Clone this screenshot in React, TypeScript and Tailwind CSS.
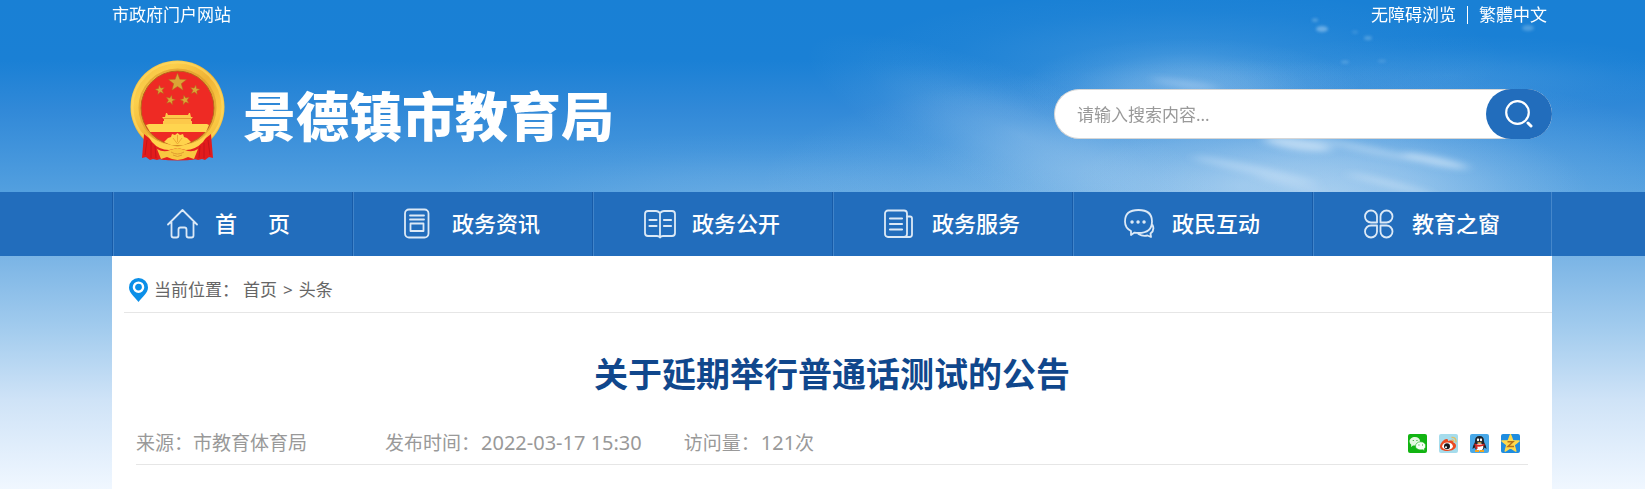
import React from 'react';
import clsx from 'clsx';

const star = (cx: number, cy: number, r: number, turn = 0) =>
  Array.from({ length: 10 }, (_, i) => {
    const radius = i % 2 ? r * 0.42 : r;
    const a = ((i * 36 - 90 + turn) * Math.PI) / 180;
    return `${(cx + radius * Math.cos(a)).toFixed(2)},${(cy + radius * Math.sin(a)).toFixed(2)}`;
  }).join(' ');

const Emblem = () => (
  <svg viewBox="0 0 95 101" className="h-[101px] w-[95px] shrink-0" aria-hidden="true">
    <defs>
      <linearGradient id="gold" x1="0" y1="0" x2="1" y2="1">
        <stop offset="0" stopColor="#f3b93c" />
        <stop offset=".25" stopColor="#fbcf4c" />
        <stop offset=".5" stopColor="#f0b335" />
        <stop offset=".75" stopColor="#fccb45" />
        <stop offset="1" stopColor="#e9a92e" />
      </linearGradient>
    </defs>
    <ellipse cx="47.5" cy="47" rx="47" ry="46.5" fill="url(#gold)" />
    <ellipse cx="47.5" cy="47" rx="45" ry="44.5" fill="none" stroke="#ffdb66" strokeWidth="2" opacity=".6" />
    <ellipse cx="47.5" cy="47.500" rx="38" ry="38" fill="none" stroke="#d9982a" strokeWidth="2" opacity=".6" />
    <ellipse cx="47.5" cy="48" rx="36.5" ry="37" fill="#ee2a24" stroke="#b8641c" strokeWidth="1" />
    <g fill="#dba536" stroke="#b4671c" strokeWidth=".5">
      <polygon points={star(47.5, 22.5, 9.5)} />
      <polygon points={star(30, 30, 5, -10)} />
      <polygon points={star(65, 30, 5, 10)} />
      <polygon points={star(40.5, 40, 5, 14)} />
      <polygon points={star(55, 40, 5, -14)} />
    </g>
    <path d="M36 53h1l1 2h20l1-2h1l1 4h2l-2 2v2h1v3H33v-3h1v-2l-2-2h3z" fill="#fdc94a" />
    <path d="M33 58.500h29" stroke="#e59c30" strokeWidth="1" />
    <path d="M19 64h58l2 1-3 7H20l-4-7z" fill="#ffd54f" />
    <path d="M14 74c4 3 8 7 15 12l6 14-5-1-3 1-4-1-3 1-4-3-4 1z" fill="#e21c1c" />
    <path d="M81 74c-4 3-8 7-15 12l-6 14 5-1 3 1 4-1 3 1 4-3 4 1z" fill="#e21c1c" />
    <path d="M17 80l-2 15M21 83v15M25 86l1 12M78 80l2 15M74 83v15M70 86l-1 12" stroke="#b9121a" strokeWidth="1" opacity=".7" />
    <path d="M25 82q22 12 45 0l-3 17q-19 3-39 0z" fill="#e5201f" />
    <path d="M17 74q11 9 20 10l10.500 3 10.500-3q9-1 20-10l-5 8q-8 8-17 8l-8.500-2-8.500 2q-10 0-17-8z" fill="#ffd34c" />
    <path d="M38 78l3-1 1-3 3 1 2.500-2 2.500 2 3-1 1 3 3 1 4 4-7 3h-13l-7-3z" fill="#ffd34c" />
    <path d="M43 78l4.500 6 4.500-6M47.500 75v7" fill="none" stroke="#eda833" strokeWidth="1" />
    <path d="M27 89q7 4 13 1l7.500-2 7.500 2q7 3 13-1l-4 10-6-2-5 2-5.500 1-5.500-1-5-2-6 2z" fill="#f8c840" />
    <path d="M41 92q6.500 4 13 0M43 95q4.500 3 9 0" fill="none" stroke="#e09c30" strokeWidth="1" />
  </svg>
);

const Clouds = () => (
  <svg
    viewBox="0 0 1645 192"
    preserveAspectRatio="xMaxYMin slice"
    className="pointer-events-none absolute inset-0 h-full w-full"
    aria-hidden="true"
  >
    <defs>
      <radialGradient id="glow">
        <stop offset="0" stopColor="#d6e8f8" stopOpacity="1" />
        <stop offset=".35" stopColor="#d0e5f7" stopOpacity=".7" />
        <stop offset=".7" stopColor="#c4dff5" stopOpacity=".22" />
        <stop offset="1" stopColor="#c4dff5" stopOpacity="0" />
      </radialGradient>
      <filter id="wisp" x="-50%" y="-200%" width="200%" height="500%"><feGaussianBlur stdDeviation="6 3" /></filter>
      <filter id="speck" x="-50%" y="-50%" width="200%" height="200%"><feGaussianBlur stdDeviation="1.5" /></filter>
    </defs>
    <g fill="url(#glow)">
      <ellipse cx="1240" cy="185" rx="480" ry="125" opacity=".45" />
      <ellipse cx="1330" cy="190" rx="260" ry="85" opacity=".4" />
      <ellipse cx="1020" cy="135" rx="230" ry="60" opacity=".22" transform="rotate(22 1020 135)" />
      <ellipse cx="1190" cy="88" rx="170" ry="50" opacity=".32" />
      <ellipse cx="1180" cy="60" rx="330" ry="70" opacity=".14" />
      <ellipse cx="1450" cy="75" rx="250" ry="40" opacity=".12" />
      <ellipse cx="760" cy="192" rx="320" ry="60" opacity=".14" />
    </g>
    <g filter="url(#wisp)" fill="#e3f0fb">
      <ellipse cx="1185" cy="84" rx="34" ry="3" opacity=".3" transform="rotate(8 1185 84)" />
      <ellipse cx="1298" cy="144" rx="34" ry="6" opacity=".6" transform="rotate(8 1298 144)" />
      <ellipse cx="1365" cy="149" rx="56" ry="3" opacity=".4" transform="rotate(12 1365 149)" />
      <ellipse cx="1435" cy="161" rx="34" ry="4" opacity=".6" transform="rotate(12 1435 161)" />
      <ellipse cx="1255" cy="170" rx="64" ry="4" opacity=".35" transform="rotate(12 1255 170)" />
      <ellipse cx="1390" cy="184" rx="44" ry="3" opacity=".4" transform="rotate(14 1390 184)" />
      <ellipse cx="1290" cy="184" rx="34" ry="3" opacity=".25" transform="rotate(14 1290 184)" />
    </g>
    <g filter="url(#speck)" fill="#9ccaf0">
      <ellipse cx="1322" cy="29" rx="6" ry="3" opacity=".6" />
      <ellipse cx="1315" cy="20" rx="3" ry="1.500" opacity=".5" />
      <ellipse cx="1368" cy="38" rx="4" ry="2" opacity=".4" />
      <ellipse cx="1355" cy="32" rx="3" ry="1.500" opacity=".25" />
      <ellipse cx="1345" cy="62" rx="4" ry="1.500" opacity=".35" />
      <ellipse cx="1382" cy="61" rx="4" ry="1.500" opacity=".25" />
      <ellipse cx="1528" cy="28" rx="6" ry="3" opacity=".4" />
    </g>
  </svg>
);

const NavIcon = ({ children }: { children: React.ReactNode }) => (
  <svg
    viewBox="0 0 32 32"
    className="size-8 shrink-0"
    fill="none"
    stroke="#dce9f6"
    strokeWidth="1.8"
    strokeLinecap="round"
    strokeLinejoin="round"
    aria-hidden="true"
  >
    {children}
  </svg>
);

const navItems = [
  {
    label: '首页',
    icon: <path d="M1 16.500L15.500 2 30 16.500M4.500 14v13.500q0 2 2 2h3q2 0 2-2v-6q0-2 2-2h4q2 0 2 2v6q0 2 2 2h3q2 0 2-2V14" />,
  },
  {
    label: '政务资讯',
    icon: (
      <>
        <rect x="1" y="1.500" width="23.500" height="28" rx="4" />
        <path d="M6 7.500h14M6 11.500h14M6.500 15.500h13v7.500h-13z" />
      </>
    ),
  },
  {
    label: '政务公开',
    icon: (
      <>
        <path d="M16 5q-2-2-4-2H4Q1 3 1 6v19q0 3 3 3h9q2 0 3 1.500 1-1.500 3-1.500h9q3 0 3-3V6q0-3-3-3h-8q-2 0-4 2zM16 5v24" />
        <path d="M5.500 12h7M5.500 18h7M20 12h7M20 18h7" strokeWidth="2.200" />
      </>
    ),
  },
  {
    label: '政务服务',
    icon: (
      <>
        <rect x="1" y="2.500" width="22" height="26.500" rx="3" />
        <path d="M23 8.500h3q2 0 2 2v16q0 2.500-2.500 2.500H20" />
        <path d="M6 10.500h12M6 16h12M6 21.500h12" strokeWidth="2.200" />
      </>
    ),
  },
  {
    label: '政民互动',
    icon: (
      <>
        <path d="M7 27v-4Q1 20 1 13.500 1 2 14.500 2T28 13.500 14.500 25q-2 0-4-.4z" />
        <path d="M28.500 17q2.500 5-2 8.500l.5 3.500-3.500-1.500q-5 1-9-1.500" />
        <path d="M8 14h.1M14 14h.1M20 14h.1" strokeWidth="3.400" />
      </>
    ),
  },
  {
    label: '教育之窗',
    icon: (
      <>
        <path d="M13 14.500H7A6 6 0 1 1 13 8.500zM16.500 14.500h6a6 6 0 1 0-6-6z" />
        <path d="M13 17.500H7a6 6 0 1 0 6 6zM16.500 17.500h6a6 6 0 1 1-6 6z" />
      </>
    ),
  },
];

const shareLinks = [
  {
    name: '微信',
    art: (
      <>
        <rect width="19" height="19" rx="2" fill="#12b412" />
        <path d="M1.500 7.500C1.500 4.800 4 3 7 3s5 1.800 5 4.200-2.500 4.300-5 4.300l-2 0-2 1.500.3-2.200Q1.500 9.500 1.500 7.500z" fill="#e4f7df" />
        <path d="M7.500 12c0-2.300 2.200-4.200 5.200-4.200s5 1.900 5 4.200q0 1.800-1.500 3l.3 1.700-1.900-1q-4 .8-6-1.200-1.100-1-1.100-2.500z" fill="#f7fff5" stroke="#12b412" strokeWidth=".6" />
        <path d="M4.800 6.500h.9M8.500 6.500h.9M10.500 11h.9M14 11h.9" stroke="#159b15" strokeWidth="1.2" />
      </>
    ),
  },
  {
    name: '新浪微博',
    art: (
      <>
        <rect width="19" height="19" rx="2" fill="#a5dcec" />
        <path d="M1 12.500c0-3 4-8 7-7.500 1.500.2 1 2 1 2s5-1.800 5 .8c0 1 3 1.200 3 4 0 3.200-4 5.200-8.500 5.200S1 15.500 1 12.500z" fill="#ea4a21" />
        <ellipse cx="8.500" cy="12.200" rx="5.300" ry="3.700" fill="#fff" />
        <circle cx="8" cy="12.300" r="3" fill="#18191b" />
        <circle cx="7" cy="13.200" r="1" fill="#fff" />
        <path d="M12.500 3.500q5-.5 4.500 5M12.800 6q2-.2 2 2" fill="none" stroke="#e3bf62" strokeWidth="1.300" />
      </>
    ),
  },
  {
    name: 'QQ好友',
    art: (
      <>
        <rect width="19" height="19" rx="2" fill="#48a8e8" />
        <path d="M5 7q0-5 4.500-5T14 7q0 1.500 1 3t1.500 5l-2-1.500Q13 17 9.500 17t-5-3.500l-2 1.500q.2-3.200 1.500-5T5 7z" fill="#20242c" />
        <ellipse cx="9.500" cy="13" rx="3.800" ry="3.700" fill="#fff" />
        <ellipse cx="8" cy="5.800" rx="1.100" ry="1.500" fill="#fff" />
        <ellipse cx="11" cy="5.800" rx="1.100" ry="1.500" fill="#fff" />
        <path d="M7 8.300h5l-2.500 1.500z" fill="#f6b42c" />
        <path d="M4.500 9.500q5 2.500 10 0v2q-4 1.500-7 1v2.500h-2v-3.300l-1-.5z" fill="#da2521" />
        <path d="M5 17h4M10 17h4" stroke="#f3a51f" strokeWidth="1.800" />
      </>
    ),
  },
  {
    name: 'QQ空间',
    art: (
      <>
        <rect width="19" height="19" rx="2" fill="#1f8de0" />
        <polygon points={star(9.5, 9.8, 9)} fill="#ffd94b" stroke="#ffd94b" strokeWidth="1.500" strokeLinejoin="round" />
        <path d="M6.500 7.800h5.500l-5 4.700h6" fill="none" stroke="#b5711b" strokeWidth="1.500" />
      </>
    ),
  },
];

/* centred column shared by every band of the page */
const Column = ({ className, children }: { className?: string; children: React.ReactNode }) => (
  <div className="pl-[19px]">
    <div className={clsx('mx-auto w-full max-w-[1440px]', className)}>{children}</div>
  </div>
);

const Header = () => (
  <header className="relative">
    <Clouds />
    <div className="relative">
      <Column className="flex h-[30px] items-center justify-between pr-[5px] text-[17px] leading-[30px] text-white">
        <a href="#">市政府门户网站</a>
        <div className="flex items-center gap-[11px]">
          <a href="#">无障碍浏览</a>
          <span className="h-[18px] w-px bg-white" />
          <a href="#" lang="zh-Hant">繁體中文</a>
        </div>
      </Column>
      <Column className="flex items-start justify-between pt-[30px] pb-[31px] pl-[18px]">
        <a href="#" className="flex items-center gap-[18px] text-white">
          <Emblem />
          <span className="pt-3 text-[53px] leading-[60px] font-black">景德镇市教育局</span>
        </a>
        <form
          className="mt-[29px] flex h-[50px] w-[498px] rounded-full border-y border-l border-[#d6d6d6] bg-white"
          onSubmit={(e) => e.preventDefault()}
        >
          <input
            type="text"
            aria-label="搜索"
            placeholder="请输入搜索内容..."
            className="min-w-0 flex-1 bg-transparent pt-px pl-[22px] text-[17px] text-gray-700 outline-none placeholder:text-[#999]"
          />
          <button type="submit" aria-label="搜索" className="-my-px flex w-[66px] items-center justify-center rounded-full bg-[#226dbc]">
            <svg viewBox="0 0 28 28" className="size-7" fill="none" stroke="#fff" strokeLinecap="round" aria-hidden="true">
              <circle cx="12.500" cy="12.500" r="11.300" strokeWidth="2.200" />
              <path d="M23 23l3 3" strokeWidth="3" />
            </svg>
          </button>
        </form>
      </Column>
    </div>
  </header>
);

const MainNav = () => (
  <nav className="bg-[#226dbc]">
    <Column className="grid grid-cols-6">
      {navItems.map(({ label, icon }, i) => (
        <a
          key={label}
          href="#"
          className={clsx(
            'flex h-16 items-center gap-4 border-l border-[#175ba8] text-[22px] font-medium text-white shadow-[inset_1px_0_0_#4184c9] last:border-r last:border-r-[#4587cb]',
            i === 0 ? 'pl-[54px]' : 'pl-[51px]',
          )}
        >
          <NavIcon>{icon}</NavIcon>
          {i === 0 ? (
            <span className="flex gap-[31px] pb-px">
              <span>首</span>
              <span>页</span>
            </span>
          ) : (
            <span className="pb-px">{label}</span>
          )}
        </a>
      ))}
    </Column>
  </nav>
);

const Article = () => (
  <main>
    <div className="ml-3 flex h-[57px] items-center border-b border-[#e6e6e6] pt-3 pl-[5px] text-[17px] text-[#666]">
      <svg viewBox="0 0 19 24" className="h-6 w-[19px]" aria-hidden="true">
        <path d="M9.500 0A9.500 9.500 0 0 0 0 9.500C0 15 6 19 9.500 24 13 19 19 15 19 9.500A9.500 9.500 0 0 0 9.500 0z" fill="#0b8fe8" />
        <circle cx="9.500" cy="9.200" r="4.600" fill="none" stroke="#fff" strokeWidth="2.400" />
      </svg>
      <span className="ml-[6px]">当前位置：</span>
      <a href="#" className="ml-1">首页</a>
      <span className="mx-[6px]">&gt;</span>
      <a href="#">头条</a>
    </div>
    <h1 className="pt-[37px] text-center text-[34px] leading-[48px] font-bold text-[#10478c]">关于延期举行普通话测试的公告</h1>
    <div className="mx-6 mt-6 flex h-[43px] items-center border-b border-[#e6e6e6] text-[19px] text-[#999]">
      <span>来源：市教育体育局</span>
      <span className="ml-[78px]">
        发布时间：<time className="ml-px text-[20px]">2022-03-17 15:30</time>
      </span>
      <span className="ml-[42px]">
        访问量：<span className="ml-px text-[20px]">121</span>次
      </span>
      <div className="mr-2 ml-auto flex gap-3">
        {shareLinks.map(({ name, art }) => (
          <a key={name} href="#" aria-label={name}>
            <svg viewBox="0 0 19 19" className="size-[19px]" aria-hidden="true">{art}</svg>
          </a>
        ))}
      </div>
    </div>
  </main>
);

export default function App() {
  return (
    <div className="flex min-h-screen flex-col bg-[linear-gradient(180deg,#1980d5_0px,#1a80d5_60px,#3189d8_110px,#529fdf_190px,#7ab4e5_256px,#a3ccee_330px,#cfe3f7_400px,#f0f7ff_489px)] font-['Noto_Sans','Noto_Sans_CJK_SC',sans-serif]">
      <Header />
      <MainNav />
      <div className="flex flex-1 flex-col pl-[19px]">
        <div className="mx-auto w-full max-w-[1440px] flex-1 bg-white">
          <Article />
        </div>
      </div>
    </div>
  );
}
